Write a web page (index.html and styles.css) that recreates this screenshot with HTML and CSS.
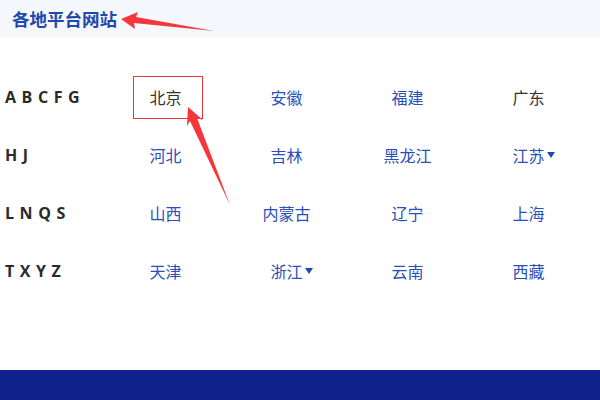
FILE: index.html
```html
<!DOCTYPE html>
<html lang="zh">
<head>
<meta charset="utf-8">
<link rel="stylesheet" href="styles.css">
</head>
<body>
<div class="page">
  <header class="head">
    <h1 class="title">各地平台网站</h1>
  </header>
  <main class="grid">
    <div class="letters">A B C F G</div>
    <div class="cell"><a class="link dark boxed">北京</a></div>
    <div class="cell"><a class="link">安徽</a></div>
    <div class="cell"><a class="link">福建</a></div>
    <div class="cell"><a class="link dark">广东</a></div>

    <div class="letters">H J</div>
    <div class="cell"><a class="link">河北</a></div>
    <div class="cell"><a class="link">吉林</a></div>
    <div class="cell"><a class="link">黑龙江</a></div>
    <div class="cell"><a class="link drop">江苏<span class="caret"></span></a></div>

    <div class="letters">L N Q S</div>
    <div class="cell"><a class="link">山西</a></div>
    <div class="cell"><a class="link">内蒙古</a></div>
    <div class="cell"><a class="link">辽宁</a></div>
    <div class="cell"><a class="link">上海</a></div>

    <div class="letters">T X Y Z</div>
    <div class="cell"><a class="link">天津</a></div>
    <div class="cell"><a class="link drop">浙江<span class="caret"></span></a></div>
    <div class="cell"><a class="link">云南</a></div>
    <div class="cell"><a class="link">西藏</a></div>
  </main>
  <footer class="foot"></footer>
  <svg class="marks" width="600" height="400" viewBox="0 0 600 400">
    <polygon fill="#f5363a" points="121,19 138,12 136,17 214,31 134,23 135,29"/>
    <polygon fill="#f5363a" points="188,107 203,120 197,118 230,205 190,121 187,126"/>
  </svg>
</div>
</body>
</html>
```
FILE: styles.css
```css
* { box-sizing: border-box; }
html, body { margin: 0; padding: 0; }
body {
  width: 600px;
  height: 400px;
  background: #fff;
  font-family: "Noto Sans CJK SC", "Noto Sans", sans-serif;
  overflow: hidden;
}
.page {
  position: relative;
  width: 600px;
  height: 400px;
  display: flex;
  flex-direction: column;
}
.head {
  height: 37px;
  background: #f4f7fc;
  display: flex;
  align-items: center;
  padding-left: 12px;
}
.title {
  margin: 0;
  font-size: 17.5px;
  font-weight: 700;
  color: #1f48ad;
  line-height: 1;
}
.grid {
  display: grid;
  grid-template-columns: 100px repeat(4, 121px);
  grid-auto-rows: 58px;
  padding: 31px 0 0 5px;
  flex: 1;
}
.letters {
  display: flex;
  align-items: center;
  font-family: "Open Sans", "Noto Sans", sans-serif;
  font-weight: 700;
  font-size: 16px;
  color: #2a2a2a;
  letter-spacing: 0.2px;
  word-spacing: 1px;
  white-space: pre;
}
.cell {
  display: flex;
  align-items: center;
  justify-content: center;
}
.link {
  font-size: 16px;
  color: #2b4fb8;
  line-height: 1;
  position: relative;
}
.link.dark { color: #333; }
.link.boxed {
  display: flex;
  align-items: center;
  justify-content: center;
  width: 70px;
  height: 43px;
  padding-right: 4px;
  border: 1px solid #e8383b;
  margin-left: 4px;
}
.caret {
  position: absolute;
  left: 35px;
  top: 5px;
  width: 0;
  height: 0;
  border-left: 4px solid transparent;
  border-right: 4px solid transparent;
  border-top: 6px solid #1f48ad;
}
.foot {
  height: 30px;
  background: #10218b;
}
.marks {
  position: absolute;
  left: 0;
  top: 0;
  pointer-events: none;
}
```
